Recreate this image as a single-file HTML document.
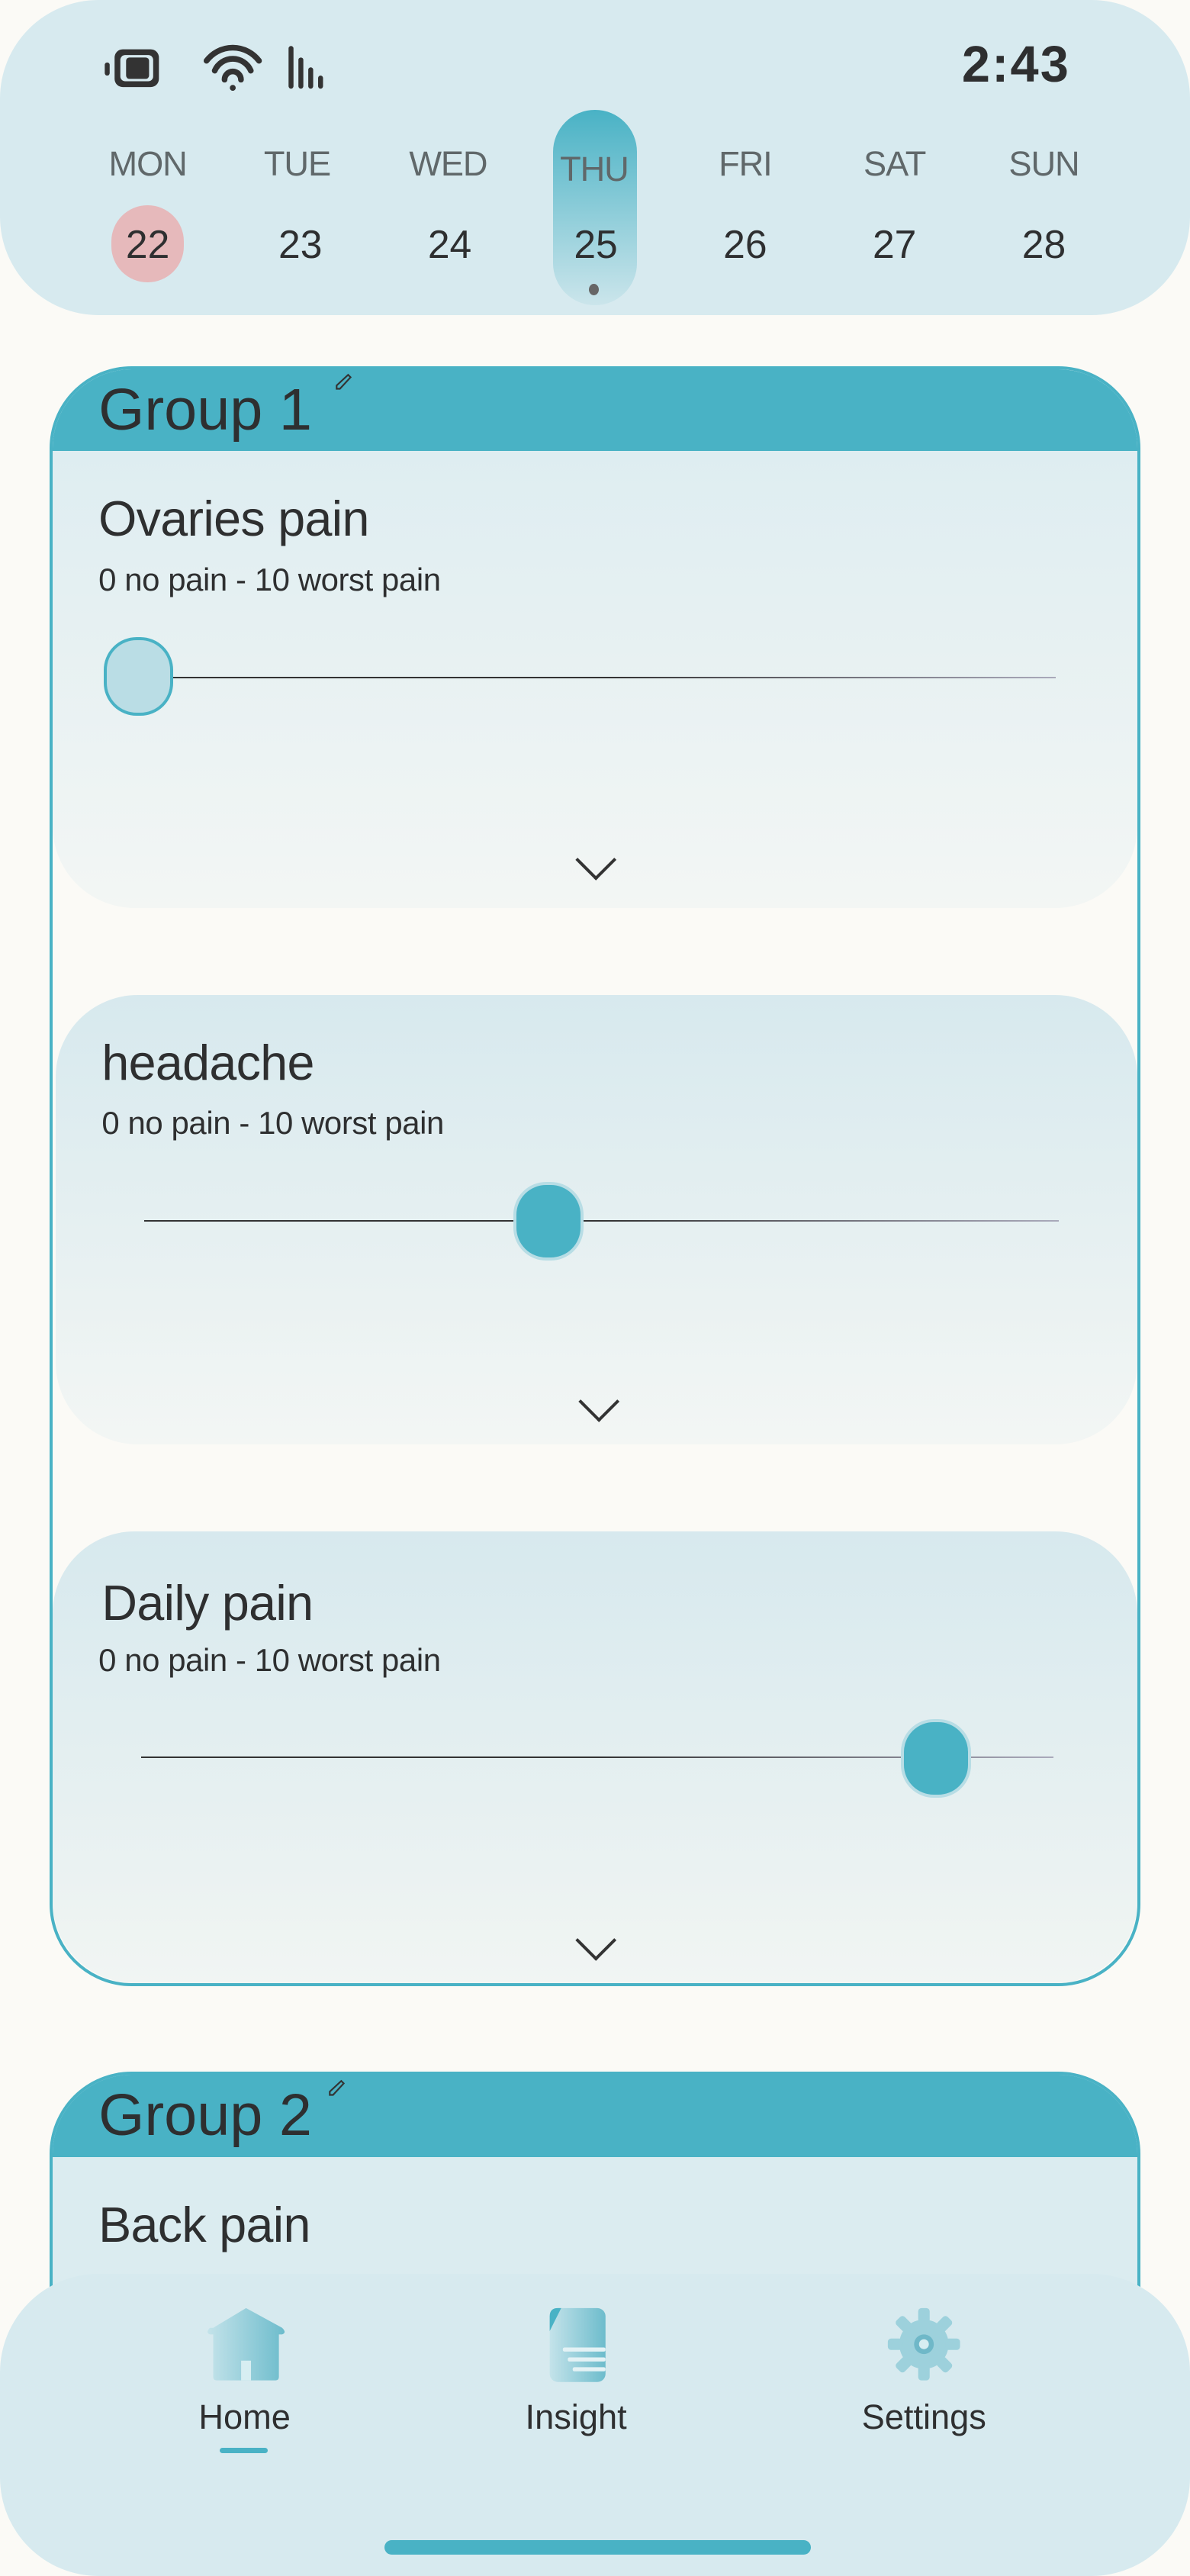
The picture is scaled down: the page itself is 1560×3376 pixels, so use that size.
<!DOCTYPE html>
<html><head><meta charset="utf-8"><style>
html,body{margin:0;padding:0;background:#fbfaf6;width:1560px;height:3376px;overflow:hidden;}
body{position:relative;}
#r{position:absolute;left:0;top:0;width:725px;height:1569px;overflow:hidden;zoom:2.151724;font-family:"Liberation Sans",sans-serif;color:#2e2f30;}
.a{position:absolute;}
.hdr{left:0;top:0;width:725px;height:192px;background:#d7eaef;border-radius:60px;}
.day{position:absolute;width:60px;text-align:center;font-size:21px;color:#60686a;top:88px;letter-spacing:-0.5px;}
.num{position:absolute;width:60px;text-align:center;font-size:24px;color:#2e2f30;top:135px;}
.title{font-size:30px;letter-spacing:-0.3px;}
.sub{font-size:19.5px;letter-spacing:-0.2px;}
.line{height:1px;background:linear-gradient(90deg,#333,#333 50%,#aab);}
.chev{width:16px;height:16px;border-right:2px solid #333;border-bottom:2px solid #333;transform:rotate(45deg);}
</style></head><body><div id="r">
<div class="a hdr"></div>
<svg class="a" style="left:62px;top:26px" width="150" height="30" viewBox="0 0 150 30">
<rect x="2" y="12" width="3" height="8" rx="1.5" fill="#333"/>
<rect x="8" y="4" width="27" height="23" rx="5" fill="#333"/>
<rect x="11.5" y="7.5" width="20" height="16" rx="3" fill="#d7eaef"/>
<rect x="15" y="9" width="14" height="13" rx="2" fill="#333"/>
<path d="M64 11 A20 20 0 0 1 96 11" stroke="#333" stroke-width="3.5" fill="none" stroke-linecap="round"/>
<path d="M69 17 A12 12 0 0 1 91 17" stroke="#333" stroke-width="3.5" fill="none" stroke-linecap="round"/>
<path d="M75 22.5 A5 5 0 0 1 85 22.5" stroke="#333" stroke-width="3.5" fill="none" stroke-linecap="round"/>
<circle cx="80" cy="27.5" r="1.8" fill="#333"/>
<rect x="114" y="2" width="3" height="26" rx="1.5" fill="#333"/>
<rect x="120" y="9" width="3" height="19" rx="1.5" fill="#333"/>
<rect x="126" y="15" width="3" height="13" rx="1.5" fill="#333"/>
<rect x="132" y="20" width="3" height="8" rx="1.5" fill="#333"/>
</svg>
<div class="a" style="left:586px;top:22px;font-size:31px;font-weight:bold;letter-spacing:1px">2:43</div>
<div class="a" style="left:68px;top:125px;width:44px;height:47px;border-radius:22px;background:#e6b9bb"></div>
<div class="a" style="left:337px;top:67px;width:51px;height:119px;border-radius:26px;background:linear-gradient(180deg,#49b2c5,#cbe5eb)"></div>
<div class="a" style="left:359px;top:173px;width:6px;height:7px;border-radius:50%;background:#666"></div>
<div class="day" style="left:60px">MON</div><div class="day" style="left:151px">TUE</div><div class="day" style="left:243px">WED</div><div class="day" style="left:332px;top:91px">THU</div><div class="day" style="left:424px">FRI</div><div class="day" style="left:515px">SAT</div><div class="day" style="left:606px">SUN</div>
<div class="num" style="left:60px">22</div><div class="num" style="left:153px">23</div><div class="num" style="left:244px">24</div><div class="num" style="left:333px">25</div><div class="num" style="left:424px">26</div><div class="num" style="left:515px">27</div><div class="num" style="left:606px">28</div>

<div class="a" style="left:30px;top:223px;width:661px;height:983px;border:2px solid #49b2c5;border-radius:50px;background:#fbfaf6;overflow:hidden">
 <div class="a" style="left:0;top:0;width:661px;height:50px;background:#49b2c5"></div>
 <div class="a" style="left:0;top:50px;width:661px;height:278px;background:linear-gradient(180deg,#deedf1,#f3f6f4);border-radius:0 0 50px 50px"></div>
 <div class="a" style="left:2px;top:381px;width:659px;height:274px;background:linear-gradient(180deg,#d7e9ee,#f3f6f4);border-radius:50px"></div>
 <div class="a" style="left:0;top:708px;width:661px;height:275px;background:linear-gradient(180deg,#d7e9ee,#f1f5f3);border-radius:50px"></div>
</div>
<div class="a" style="left:60px;top:229px;font-size:36px">Group 1</div>
<svg class="a" style="left:203px;top:227px" width="12" height="12" viewBox="0 0 12 12"><path d="M2 10 L2 8 L9 1.5 L10.5 3 L4 10 Z" fill="none" stroke="#333" stroke-width="1"/></svg>

<div class="a title" style="left:60px;top:299px">Ovaries pain</div>
<div class="a sub" style="left:60px;top:342px">0 no pain - 10 worst pain</div>
<div class="a line" style="left:100px;top:412px;width:543px"></div>
<div class="a" style="left:63px;top:388px;width:39px;height:44px;border-radius:20px;background:#badde5;border:2px solid #49b2c5"></div>
<div class="a chev" style="left:354px;top:515px"></div>

<div class="a title" style="left:62px;top:630px">headache</div>
<div class="a sub" style="left:62px;top:673px">0 no pain - 10 worst pain</div>
<div class="a line" style="left:88px;top:743px;width:557px"></div>
<div class="a" style="left:313px;top:720px;width:39px;height:44px;border-radius:20px;background:#49b2c5;border:2px solid #b8dde5"></div>
<div class="a chev" style="left:356px;top:845px"></div>

<div class="a title" style="left:62px;top:959px">Daily pain</div>
<div class="a sub" style="left:60px;top:1000px">0 no pain - 10 worst pain</div>
<div class="a line" style="left:86px;top:1070px;width:556px"></div>
<div class="a" style="left:549px;top:1047px;width:39px;height:44px;border-radius:20px;background:#49b2c5;border:2px solid #b8dde5"></div>
<div class="a chev" style="left:354px;top:1173px"></div>

<div class="a" style="left:30px;top:1262px;width:661px;height:250px;border:2px solid #49b2c5;border-bottom:none;border-radius:50px 50px 0 0;background:#dbecf0;overflow:hidden">
 <div class="a" style="left:0;top:0;width:661px;height:50px;background:#49b2c5"></div>
</div>
<div class="a" style="left:60px;top:1268px;font-size:36px">Group 2</div>
<svg class="a" style="left:199px;top:1266px" width="12" height="12" viewBox="0 0 12 12"><path d="M2 10 L2 8 L9 1.5 L10.5 3 L4 10 Z" fill="none" stroke="#333" stroke-width="1"/></svg>
<div class="a title" style="left:60px;top:1338px">Back pain</div>

<div class="a" style="left:0;top:1385px;width:725px;height:184px;background:#d7eaef;border-radius:60px"></div>
<svg class="a" style="left:120px;top:1400px" width="500" height="55" viewBox="0 0 500 55">
<defs><linearGradient id="g" x1="0" x2="1"><stop offset="0" stop-color="#c4e3ea"/><stop offset="1" stop-color="#6dbccc"/></linearGradient></defs>
<path d="M10 18 L30 6 L52 18 Q55 21 52 22 L50 22 L50 48 Q50 50 48 50 L12 50 Q10 50 10 48 L10 22 L8 22 Q5 21 8 18 Z" fill="url(#g)"/>
<rect x="27" y="38" width="6" height="12" fill="#d7eef2"/>
<rect x="215" y="6" width="34" height="45" rx="5" fill="url(#g)"/>
<path d="M215 20 L215 11 Q215 6 220 6 L222 6 Z" fill="#49b2c5"/>
<rect x="223" y="30" width="26" height="2.5" rx="1" fill="#e4f2f5"/><rect x="226" y="36" width="23" height="2.5" rx="1" fill="#e4f2f5"/><rect x="229" y="42" width="20" height="2.5" rx="1" fill="#e4f2f5"/>
<g transform="translate(443,28)" fill="#9dd1dc">
<circle r="15"/>
<g id="t"><rect x="-3.5" y="-22" width="7" height="9" rx="2"/></g>
<use href="#t" transform="rotate(45)"/><use href="#t" transform="rotate(90)"/><use href="#t" transform="rotate(135)"/><use href="#t" transform="rotate(180)"/><use href="#t" transform="rotate(225)"/><use href="#t" transform="rotate(270)"/><use href="#t" transform="rotate(315)"/>
<circle r="6" fill="#6fb8c8"/><circle r="3" fill="#d7eef2"/>
</g>
</svg>
<div class="a" style="left:121px;top:1460px;font-size:21px">Home</div>
<div class="a" style="left:320px;top:1460px;font-size:21px">Insight</div>
<div class="a" style="left:525px;top:1460px;font-size:21px">Settings</div>
<div class="a" style="left:134px;top:1491px;width:29px;height:3px;border-radius:2px;background:#49b2c5"></div>
<div class="a" style="left:234px;top:1547px;width:260px;height:9px;border-radius:5px;background:#49b2c5"></div>
</div></body></html>
